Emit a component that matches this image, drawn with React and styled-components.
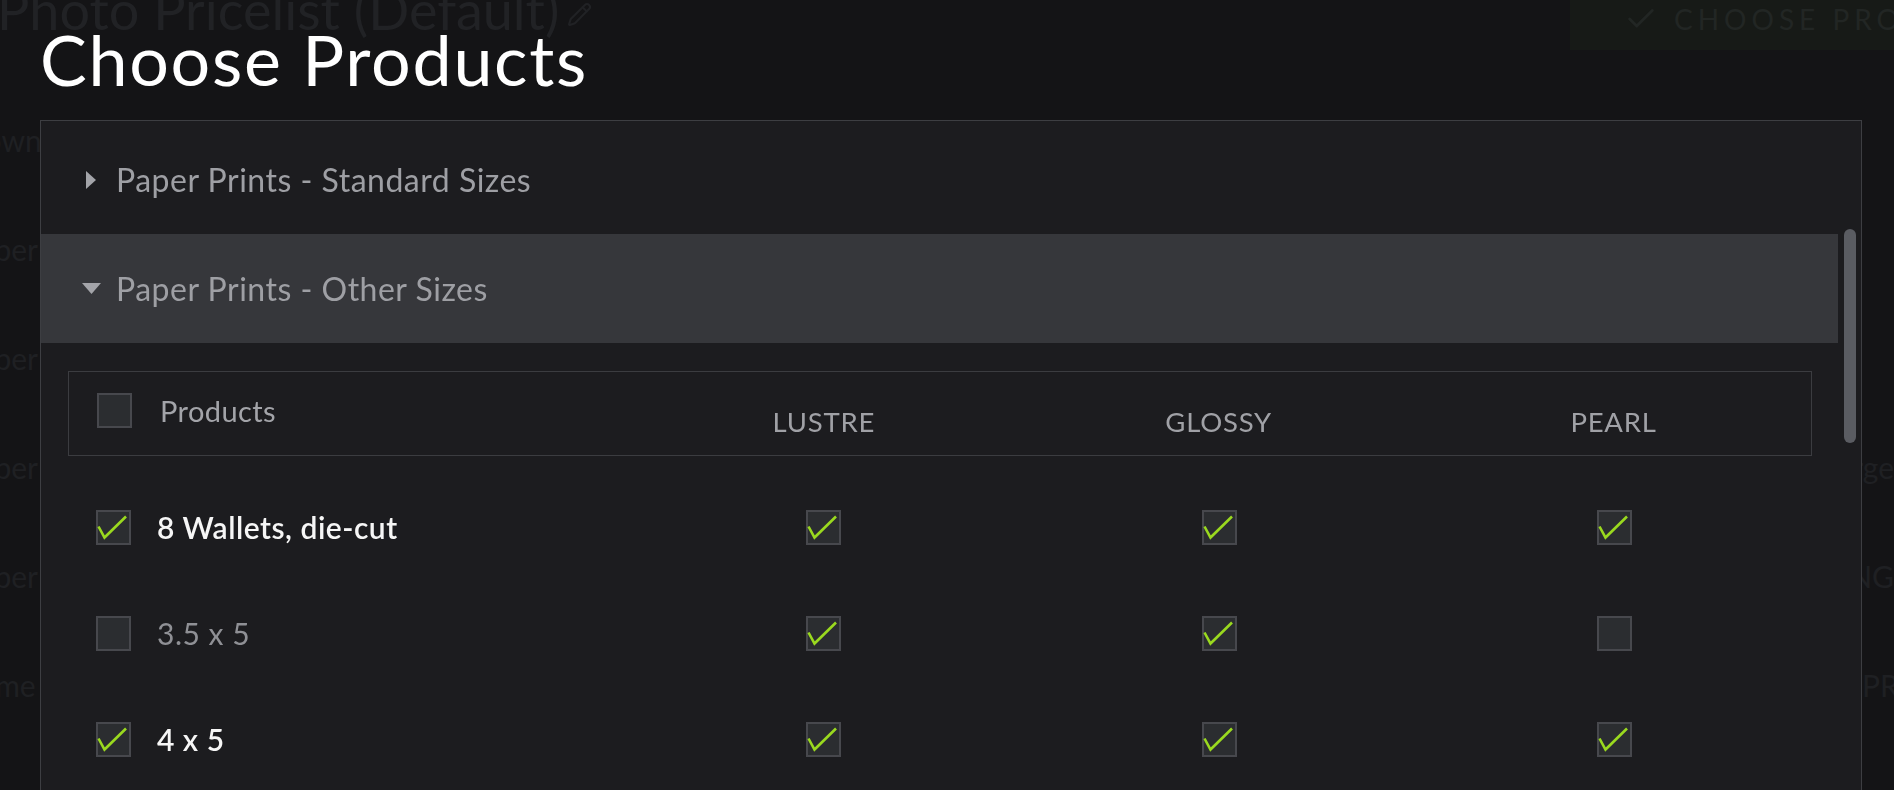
import React from 'react'
import styled, { createGlobalStyle } from 'styled-components'
import { Pencil, Check } from 'lucide-react'

const products = [
  { id: 1, name: '8 Wallets, die-cut', lustre: true, glossy: true, pearl: true },
  { id: 2, name: '3.5 x 5', lustre: true, glossy: true, pearl: false },
  { id: 3, name: '4 x 5', lustre: true, glossy: true, pearl: true },
]

const ghostRows = [
  { id: 1, left: 'Downloads', right: '' },
  { id: 2, left: 'Paper Prints', right: '' },
  { id: 3, left: 'Paper Prints', right: '' },
  { id: 4, left: 'Paper Prints', right: 'Large' },
  { id: 5, left: 'Paper Prints', right: 'PNG' },
  { id: 6, left: 'Some Add-ons', right: 'PRINTS' },
]

const Caret = ({ open }) =>
  open ? (
    <CaretBox>
      <svg width='19' height='11' viewBox='0 0 19 11'>
        <polygon points='0,0 19,0 9.5,11' fill='currentColor' />
      </svg>
    </CaretBox>
  ) : (
    <CaretBox>
      <svg width='10' height='18' viewBox='0 0 10 18'>
        <polygon points='0,0 10,9 0,18' fill='currentColor' />
      </svg>
    </CaretBox>
  )

const Box = ({ checked }) => (
  <CheckBox>
    {checked && (
      <svg width='31' height='31' viewBox='0 0 31 31'>
        <polyline
          points='0.5,14.5 6.5,25.5 28,4.5'
          fill='none'
          stroke='#9ad91f'
          strokeWidth='2.6'
          strokeLinejoin='miter'
        />
      </svg>
    )}
  </CheckBox>
)

const App = () => {
  return (
    <>
      <GlobalStyle />
      <Page>
        <GhostHeader>
          <GhostTitle>
            Photo Pricelist (Default)
            <Pencil size={25} strokeWidth={2} />
          </GhostTitle>
          <GhostButton>
            <Check size={34} strokeWidth={2} />
            <span>CHOOSE PRODUCTS</span>
          </GhostButton>
        </GhostHeader>
        <GhostList>
          {ghostRows.map((row) => (
            <GhostRow key={row.id} cut={row.id === 6}>
              <span>{row.left}</span>
              <span>{row.right}</span>
            </GhostRow>
          ))}
        </GhostList>
      </Page>

      <Overlay>
        <Title>Choose Products</Title>
        <Panel>
          <Scroll>
            <Section>
              <Caret />
              <SectionLabel>Paper Prints - Standard Sizes</SectionLabel>
            </Section>
            <Section active>
              <Caret open />
              <SectionLabel>Paper Prints - Other Sizes</SectionLabel>
            </Section>

            <Table>
              <HeaderRow>
                <ProductHead>
                  <Box />
                  <span>Products</span>
                </ProductHead>
                <ColHead>LUSTRE</ColHead>
                <ColHead>GLOSSY</ColHead>
                <ColHead>PEARL</ColHead>
              </HeaderRow>
              <Rows>
                {products.map((p) => {
                  const all = p.lustre && p.glossy && p.pearl
                  return (
                    <Row key={p.id}>
                      <ProductCell>
                        <Box checked={all} />
                        <ProductName dim={!all}>{p.name}</ProductName>
                      </ProductCell>
                      <Cell>
                        <Box checked={p.lustre} />
                      </Cell>
                      <Cell>
                        <Box checked={p.glossy} />
                      </Cell>
                      <Cell>
                        <Box checked={p.pearl} />
                      </Cell>
                    </Row>
                  )
                })}
              </Rows>
            </Table>
          </Scroll>
          <Track>
            <Thumb />
          </Track>
        </Panel>
      </Overlay>
    </>
  )
}

export default App

// Styles
const GlobalStyle = createGlobalStyle`
  html, body {
    margin: 0;
    height: 100%;
    overflow: hidden;
    background: #141416;
    font-family: Lato, "Noto Sans", sans-serif;
  }
  #root {
    height: 100%;
  }
`

const Page = styled.div`
  height: 100%;
  overflow: hidden;
`

const GhostHeader = styled.div`
  display: flex;
  justify-content: space-between;
  align-items: flex-start;
  margin-top: -26px;
`

const GhostTitle = styled.h1`
  margin: 0 0 0 -3px;
  font-size: 54px;
  font-weight: 400;
  line-height: 72px;
  color: #212225;
  display: flex;
  align-items: center;
  gap: 8px;
  white-space: nowrap;

  & svg {
    flex: none;
    margin-top: 8px;
  }
`

const GhostButton = styled.div`
  width: 400px;
  height: 76px;
  margin-right: -76px;
  background: #171a17;
  color: #222624;
  display: flex;
  align-items: center;
  gap: 16px;
  padding: 14px 0 0 54px;
  box-sizing: border-box;
  font-size: 28px;
  letter-spacing: 5px;
  white-space: nowrap;
  overflow: hidden;

  & svg {
    flex: none;
  }
`

const GhostList = styled.div`
  padding-top: 35px;
`

const GhostRow = styled.div`
  height: 109px;
  display: flex;
  align-items: center;
  justify-content: space-between;
  margin-left: -38px;
  margin-right: ${(p) => (p.cut ? '-70px' : '0')};
  font-size: 30px;
  color: #1f2023;
  white-space: nowrap;
`

const Overlay = styled.div`
  position: fixed;
  inset: 0;
  padding: 25px 32px 0 40px;
  display: flex;
  flex-direction: column;
  overflow: hidden;
`

const Title = styled.h2`
  margin: 0 0 27px;
  font-size: 70px;
  line-height: 68px;
  font-weight: 400;
  color: #ffffff;
  letter-spacing: 1.7px;
`

const Panel = styled.div`
  flex: 1;
  display: flex;
  border: 1px solid #3d3e42;
  border-bottom: none;
  background: #1c1c1f;
  overflow: hidden;
`

const Scroll = styled.div`
  flex: 1;
  padding-top: 4px;
`

const Section = styled.div`
  height: 109px;
  display: flex;
  align-items: center;
  padding-left: 39px;
  background: ${(p) => (p.active ? '#36373b' : 'transparent')};
  color: #9e9fa4;
`

const CaretBox = styled.span`
  width: 22px;
  margin-right: 14px;
  display: flex;
  justify-content: center;
  align-items: center;
  color: #a3a4a9;
`

const SectionLabel = styled.span`
  font-size: 32px;
  letter-spacing: 0.5px;
  font-weight: 400;
`

const Table = styled.div`
  padding: 28px 26px 0 27px;
`

const HeaderRow = styled.div`
  height: 85px;
  box-sizing: border-box;
  border: 1px solid #3b3c40;
  display: grid;
  grid-template-columns: 32% repeat(3, 1fr);
`

const ProductHead = styled.div`
  align-self: start;
  display: flex;
  align-items: center;
  gap: 28px;
  padding: 21px 0 0 28px;
  font-size: 29px;
  letter-spacing: 0.4px;
  color: #a3a4a9;
`

const ColHead = styled.div`
  align-self: center;
  padding-top: 15px;
  text-align: center;
  font-size: 27.5px;
  letter-spacing: 0.8px;
  color: #a0a1a6;
`

const Rows = styled.div`
  margin-top: 18px;
`

const Row = styled.div`
  height: 106px;
  display: grid;
  grid-template-columns: 32% repeat(3, 1fr);
  align-items: center;
`

const ProductCell = styled.div`
  display: flex;
  align-items: center;
  gap: 26px;
  padding-left: 28px;
`

const ProductName = styled.span`
  font-size: 30px;
  letter-spacing: 0.5px;
  font-weight: ${(p) => (p.dim ? 400 : 600)};
  color: ${(p) => (p.dim ? '#8f9095' : '#f6f6f6')};
`

const Cell = styled.div`
  display: flex;
  justify-content: center;
`

const CheckBox = styled.span`
  width: 35px;
  height: 35px;
  flex: none;
  box-sizing: border-box;
  border: 2px solid #47484d;
  background: #2b2d30;
  display: block;

  & svg {
    display: block;
    overflow: visible;
  }
`

const Track = styled.div`
  width: 23px;
  flex: none;
  padding: 108px 0 0 6px;
  box-sizing: border-box;
`

const Thumb = styled.div`
  width: 12px;
  height: 214px;
  border-radius: 6px;
  background: #5a5c62;
`
